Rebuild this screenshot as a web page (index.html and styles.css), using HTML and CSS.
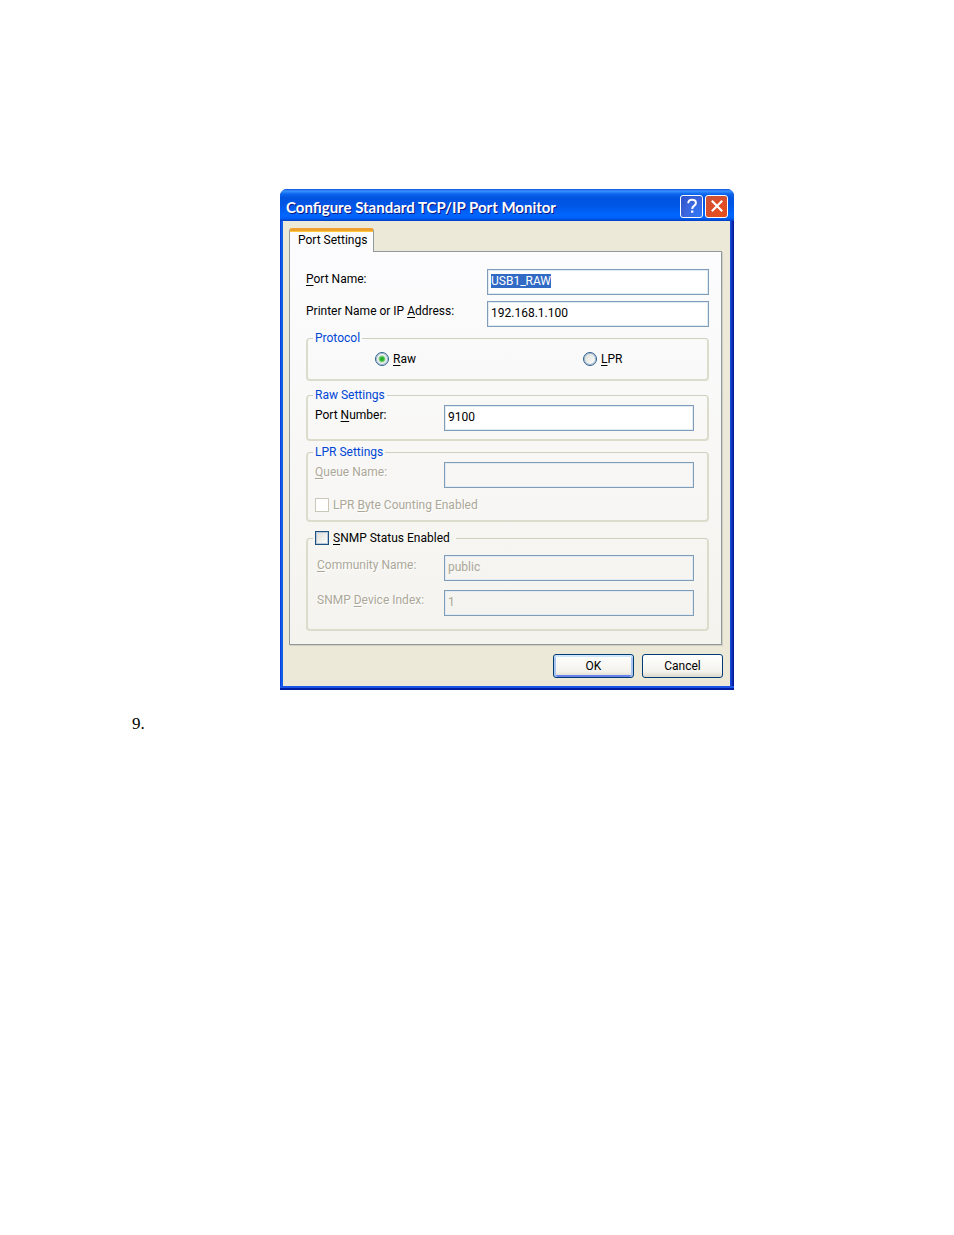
FILE: index.html
```html
<!DOCTYPE html>
<html lang="en">
<head>
<meta charset="utf-8">
<title>Configure Standard TCP/IP Port Monitor</title>
<link rel="stylesheet" href="styles.css">
</head>
<body>
<main class="page">
  <form class="dialog" aria-labelledby="dialog-title">
    <header class="titlebar">
      <h1 class="title" id="dialog-title">Configure Standard TCP/IP Port Monitor</h1>
      <button class="caption-button help" type="button" aria-label="Help">
        <svg viewBox="0 0 18 18" width="18" height="18" fill="none" stroke="#fff" stroke-width="2"><path d="M5.3 6.2C5.3 3.8 6.8 2.7 9.1 2.7s3.8 1.2 3.8 3.2c0 1.5-.8 2.2-1.9 3-1.3.9-1.8 1.5-1.8 3"/><path d="M9.2 13.6v2.2" stroke-width="2.3"/></svg>
      </button>
      <button class="caption-button close" type="button" aria-label="Close">
        <svg viewBox="0 0 18 18" width="18" height="18" fill="none" stroke="#fff" stroke-width="2.2"><path d="M3.8 3.8l10.4 10.4M14.2 3.8L3.8 14.2"/></svg>
      </button>
    </header>
    <div class="client">
      <div class="tabs" role="tablist">
        <button class="tab" type="button" role="tab" aria-selected="true">Port Settings</button>
      </div>
      <section class="panel">
        <div class="row">
          <label class="label wide" for="port-name"><u>P</u>ort Name:</label>
          <input class="field" id="port-name" type="text" value="USB1_RAW">
        </div>
        <div class="row">
          <label class="label wide" for="address">Printer Name or IP <u>A</u>ddress:</label>
          <input class="field" id="address" type="text" value="192.168.1.100">
        </div>
        <fieldset class="group protocol">
          <legend class="legend">Protocol</legend>
          <div class="choices">
            <label class="choice"><input class="radio" type="radio" name="protocol" checked><span><u>R</u>aw</span></label>
            <label class="choice"><input class="radio" type="radio" name="protocol"><span><u>L</u>PR</span></label>
          </div>
        </fieldset>
        <fieldset class="group raw">
          <legend class="legend">Raw Settings</legend>
          <div class="row">
            <label class="label" for="port-number">Port <u>N</u>umber:</label>
            <input class="field" id="port-number" type="text" value="9100">
          </div>
        </fieldset>
        <fieldset class="group lpr">
          <legend class="legend">LPR Settings</legend>
          <div class="row">
            <label class="label disabled" for="queue"><u>Q</u>ueue Name:</label>
            <input class="field" id="queue" type="text" disabled>
          </div>
          <label class="choice disabled"><input class="check" type="checkbox" disabled><span>LPR <u>B</u>yte Counting Enabled</span></label>
        </fieldset>
        <fieldset class="group snmp">
          <legend class="legend"><label class="choice"><input class="check" type="checkbox"><span><u>S</u>NMP Status Enabled</span></label></legend>
          <div class="row">
            <label class="label disabled" for="community"><u>C</u>ommunity Name:</label>
            <input class="field" id="community" type="text" value="public" disabled>
          </div>
          <div class="row">
            <label class="label disabled" for="device">SNMP <u>D</u>evice Index:</label>
            <input class="field" id="device" type="text" value="1" disabled>
          </div>
        </fieldset>
      </section>
      <footer class="actions">
        <button class="button default" type="submit">OK</button>
        <button class="button" type="button">Cancel</button>
      </footer>
    </div>
  </form>
  <p class="step">9.</p>
</main>
<script src="script.js"></script>
</body>
</html>
```
FILE: styles.css
```css
* { box-sizing: border-box; }
body { margin: 0; background: #fff; color: #000; font: 12px/14px Roboto, "Liberation Sans", sans-serif; }
button, input { font: inherit; color: inherit; margin: 0; }
u { text-underline-offset: 2px; }

.page { padding: 189px 72px 40px 132px; }
.dialog {
  max-width: 454px;
  margin: 0 auto;
  padding: 0 4px 4px 3px;
  border-radius: 7px 7px 0 0;
  background: linear-gradient(90deg, #0831d9 0, #166aee 2px, #0855dd 3px, #0855dd calc(100% - 4px), #1640d0 calc(100% - 3px), #00138c 100%);
  box-shadow: inset 0 -2px #001ea0, inset 0 -4px #1a55e8;
  overflow: hidden;
}
.titlebar {
  display: flex;
  align-items: center;
  gap: 2px;
  height: 32px;
  margin: 0 -4px 0 -3px;
  padding: 2px 6px 0;
  background: linear-gradient(#0a50d8 0, #3c92ff 2px, #0c66ee 5px, #0054e0 9px, #0055e5 16px, #0066ff 26px, #0060f8 29px, #0040c4 32px);
}
.title { flex: 1; margin: 0; padding-top: 1px; color: #fff; font: bold 15px/18px Lato, "Open Sans", sans-serif; text-shadow: 1px 1px #0a1883; white-space: nowrap; }
.caption-button { display: grid; place-items: center; flex: none; width: 23px; height: 23px; padding: 0; border: 1px solid #fff; border-radius: 3px; }
.help { background: radial-gradient(circle at 80% 85%, #2f75f5, #3c66dd 50%, #2a50c8); }
.close { background: radial-gradient(circle at 70% 85%, #e84f1c, #dc4d28 50%, #c9543c); }

.client { padding: 7px 8px 8px 6px; background: #ece9d8; }
.tabs { position: relative; display: flex; }
.tab {
  height: 24px;
  margin-bottom: -1px;
  padding: 0 6px 3px 8px;
  border: 1px solid #919b9c;
  border-top: 3px solid #ffc73c;
  border-bottom: 0;
  border-radius: 3px 3px 0 0;
  background: #fcfcfe;
  box-shadow: inset 0 1px #ffc73c;
  border-top-color: #f0a030;
}
.panel {
  padding: 17px 12px 13px 16px;
  border: 1px solid #919b9c;
  background: linear-gradient(#fcfcfe, #f4f3ee);
  box-shadow: 1px 1px #cfcfc4;
}
.row { display: flex; align-items: flex-start; margin-bottom: 6px; }
.label { flex: none; width: 129px; padding-top: 3px; white-space: nowrap; }
.wide { width: 181px; }
.field { flex: 1; min-width: 0; height: 26px; padding: 0 3px 3px; border: 1px solid #7f9db9; border-radius: 0; outline: 0; background: #fff; box-shadow: inset 0 0 0 1px #e2eaf2; }
.field:disabled { color: #aca899; background: transparent; }
.field::selection { color: #fff; background: #316ac5; }
.disabled { color: #aca899; text-shadow: 1px 1px #fff; }

.group { min-width: 0; margin: 0 0 7px; padding: 0 13px 0 7px; border: solid #dcdccd; border-width: 1px 2px 2px; border-top-color: #d0d0bf; border-radius: 4px; }
.legend { margin-left: -2px; padding: 0 2px; color: #0046d5; }
.protocol { height: 50px; margin-top: -2px; }
.raw { height: 53px; margin-bottom: 4px; padding-top: 3px; }
.lpr { height: 77px; margin-bottom: 9px; padding-top: 3px; }
.snmp { height: 100px; margin-bottom: 0; padding-top: 10px; }
.snmp .row { margin-bottom: 9px; }
.snmp .legend { padding-right: 6px; color: #000; }
.snmp .label { padding-left: 2px; }
.lpr .row { margin-bottom: 10px; }

.choices { display: grid; grid-template-columns: 208px 1fr; padding: 7px 0 0 60px; }
.choice { display: flex; align-items: center; gap: 4px; }
.radio, .check { appearance: none; flex: none; width: 14px; height: 14px; border: 1px solid #1c5180; background: linear-gradient(135deg, #dcdcd7, #fff); }
.radio { border-radius: 50%; border-color: #2c5f90; box-shadow: inset 0 0 0 1px #a9bfd2; }
.radio:checked { background: radial-gradient(circle, #21a121 0, #3abb3a 2px, #eef0ee 4px, #fff 6px); }
.check { box-shadow: inset 0 0 0 1px #b5c7d6; }
.check:disabled { border-color: #cac8bb; background: #fff; box-shadow: none; }

.actions { display: flex; justify-content: flex-end; gap: 8px; margin: 9px -1px 0 0; }
.button { width: 81px; height: 24px; padding: 0; border: 1px solid #003c74; border-radius: 3px; background: linear-gradient(#fff, #f3f2ec 75%, #dcd8cc); }
.default { box-shadow: inset 0 2px #cee7ff, inset 2px 0 #a9c5f0, inset -2px 0 #a9c5f0, inset 0 -2px #6982ee; }
.step { margin: 24px 0 0; font: 17px/20px "Liberation Serif", serif; }
```
FILE: script.js
```js
const portName = document.getElementById("port-name");
portName.focus();
portName.select();
```
